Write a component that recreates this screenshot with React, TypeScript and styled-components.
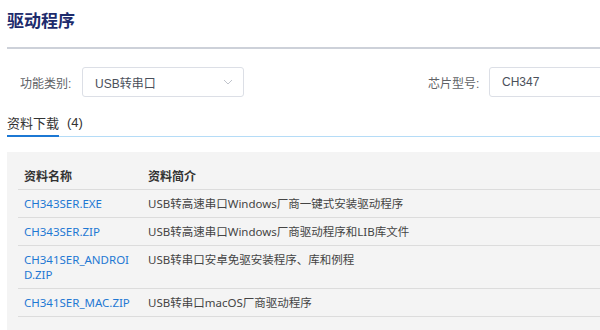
import React from "react";
import styled, { createGlobalStyle } from "styled-components";

const GlobalStyle = createGlobalStyle`
  body {
    margin: 0;
    background: #ffffff;
    overflow: hidden;
    font-family: "Liberation Sans", "Noto Sans CJK SC", sans-serif;
  }
`;

const Page = styled.div`
  width: 660px;
  padding: 0 0 0 7px;
`;

const Title = styled.h1`
  margin: 0;
  padding-top: 9px;
  height: 38px;
  font-size: 17px;
  line-height: 22px;
  font-weight: 700;
  color: #1d2b6c;
  font-family: "Noto Sans CJK SC", sans-serif;
  border-bottom: 2px solid #cdd1d9;
`;

const FilterRow = styled.div`
  display: flex;
  align-items: center;
  margin-top: 18px;
  padding-left: 13px;
`;

const Label = styled.span<{ w: number }>`
  width: ${(p) => p.w}px;
  font-size: 12px;
  color: #606266;
`;

const Field = styled.div<{ w: number }>`
  box-sizing: border-box;
  width: ${(p) => p.w}px;
  height: 30px;
  border: 1px solid #dcdfe6;
  border-radius: 3px;
  display: flex;
  align-items: center;
  justify-content: space-between;
  padding: 0 10px 0 12px;
  font-size: 12px;
  color: #4a4f5a;
`;

const Spacer = styled.div`
  width: 184px;
`;

const Tabs = styled.div`
  display: flex;
  align-items: flex-end;
  margin-top: 14px;
  height: 25px;
  border-bottom: 1px solid #b5dcf7;
`;

const Tab = styled.div`
  font-size: 13px;
  color: #333;
  padding-bottom: 4px;
  border-bottom: 2px solid #1c78d4;
  margin-bottom: -1px;
  font-family: "Noto Sans CJK SC", sans-serif;
  line-height: 17px;
`;

const Count = styled.span`
  font-size: 13px;
  color: #333;
  margin-left: 8px;
  padding-bottom: 5px;
  line-height: 17px;
`;

const TableWrap = styled.div`
  margin-top: 15px;
  background: #f4f4f4;
  padding: 11px 0 30px 11px;
`;

const Table = styled.table`
  border-collapse: collapse;
  table-layout: fixed;
  width: 640px;
  font-family: "Noto Sans", "Noto Sans CJK SC", sans-serif;
  font-size: 11.5px;
`;

const Th = styled.th`
  text-align: left;
  font-weight: 700;
  color: #333;
  padding: 5px 14px 5px 6px;
  line-height: 16px;
  border-bottom: 1px solid #dcdcdc;
  font-family: "Noto Sans CJK SC", sans-serif;
  font-size: 12px;
`;

const Td = styled.td`
  padding: 6px 10px 6px 6px;
  line-height: 15px;
  vertical-align: top;
  color: #444;
  border-bottom: 1px solid #dcdcdc;
  word-break: break-all;
`;

const Link = styled.a`
  color: #1e78d3;
  text-decoration: none;
`;

const Chevron = () => (
  <svg width="10" height="6" viewBox="0 0 10 6" fill="none">
    <path d="M1 1l4 4 4-4" stroke="#c0c4cc" strokeWidth="1" />
  </svg>
);

const files = [
  { name: "CH343SER.EXE", desc: "USB转高速串口Windows厂商一键式安装驱动程序" },
  { name: "CH343SER.ZIP", desc: "USB转高速串口Windows厂商驱动程序和LIB库文件" },
  { name: "CH341SER_ANDROID.ZIP", desc: "USB转串口安卓免驱安装程序、库和例程" },
  { name: "CH341SER_MAC.ZIP", desc: "USB转串口macOS厂商驱动程序" },
];

const App = () => {
  return (
    <Page>
      <GlobalStyle />
      <Title>驱动程序</Title>
      <FilterRow>
        <Label w={62}>功能类别:</Label>
        <Field w={162}>
          USB转串口
          <Chevron />
        </Field>
        <Spacer />
        <Label w={61}>芯片型号:</Label>
        <Field w={150}>CH347</Field>
      </FilterRow>
      <Tabs>
        <Tab>资料下载</Tab>
        <Count>(4)</Count>
      </Tabs>
      <TableWrap>
        <Table>
          <colgroup>
            <col style={{ width: 124 }} />
            <col />
          </colgroup>
          <thead>
            <tr>
              <Th>资料名称</Th>
              <Th>资料简介</Th>
            </tr>
          </thead>
          <tbody>
            {files.map((f) => (
              <tr key={f.name}>
                <Td>
                  <Link href="#">{f.name}</Link>
                </Td>
                <Td>{f.desc}</Td>
              </tr>
            ))}
          </tbody>
        </Table>
      </TableWrap>
    </Page>
  );
};

export default App;
